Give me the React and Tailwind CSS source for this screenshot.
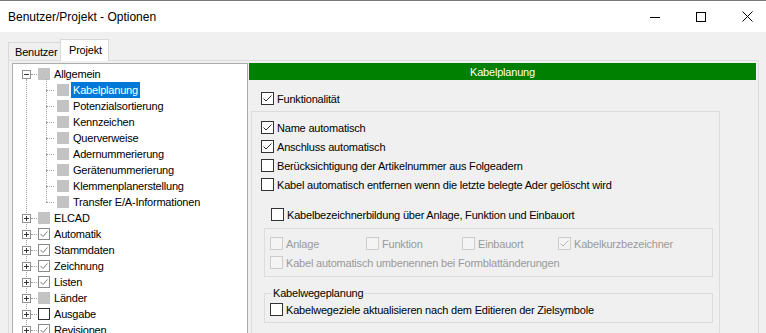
import React from 'react';

const children = [
  'Kabelplanung',
  'Potenzialsortierung',
  'Kennzeichen',
  'Querverweise',
  'Adernummerierung',
  'Gerätenummerierung',
  'Klemmenplanerstellung',
  'Transfer E/A-Informationen',
];

const topItems = [
  { name: 'ELCAD', state: 'gray' },
  { name: 'Automatik', state: 'checked' },
  { name: 'Stammdaten', state: 'checked' },
  { name: 'Zeichnung', state: 'checked' },
  { name: 'Listen', state: 'checked' },
  { name: 'Länder', state: 'gray' },
  { name: 'Ausgabe', state: 'empty' },
  { name: 'Revisionen', state: 'checked' },
];

function Check({ checked, disabled }) {
  return (
    <span
      className={`w-[13px] h-[13px] shrink-0 border flex items-center justify-center ${
        disabled ? 'border-[#cccccc] bg-[#f4f4f4]' : 'border-[#333333] bg-white'
      }`}
    >
      {checked && (
        <svg width="11" height="11" viewBox="0 0 11 11">
          <path d="M1.5 5.5 L4 8 L9.5 2.5" fill="none" stroke={disabled ? '#b5b5b5' : '#333333'} strokeWidth="1" />
        </svg>
      )}
    </span>
  );
}

function Option({ label, checked, disabled, className = '' }) {
  return (
    <div className={`h-[19px] flex items-center ${className}`}>
      <Check checked={checked} disabled={disabled} />
      <span className={`ml-[3px] whitespace-nowrap ${disabled ? 'text-[#9a9a9a]' : 'text-black'}`}>{label}</span>
    </div>
  );
}

function ExpandBox({ open }) {
  return (
    <span className="relative z-10 w-[9px] h-[9px] shrink-0 border border-[#919191] bg-white flex items-center justify-center">
      <svg width="7" height="7" viewBox="0 0 7 7">
        <path d="M1 3.5 H6" stroke="#333" strokeWidth="1" />
        {!open && <path d="M3.5 1 V6" stroke="#333" strokeWidth="1" />}
      </svg>
    </span>
  );
}

function TreeIcon({ state }) {
  if (state === 'gray') return <span className="block w-[12px] h-[12px] shrink-0 bg-[#c3c3c3]" />;
  return (
    <span
      className={`w-[12px] h-[12px] shrink-0 border bg-white flex items-center justify-center ${
        state === 'empty' ? 'border-[#333333]' : 'border-[#8a8a8a]'
      }`}
    >
      {state === 'checked' && (
        <svg width="10" height="10" viewBox="0 0 10 10">
          <path d="M1.5 5 L4 7.5 L8.5 2.5" fill="none" stroke="#7a7a7a" strokeWidth="1" />
        </svg>
      )}
    </span>
  );
}

function Tree() {
  return (
    <div className="relative w-[236px] mt-[2px] border border-b-0 border-[#acacac] bg-white pt-[2px] overflow-hidden">
      {/* tree lines */}
      <div className="absolute left-[13px] top-[15px] bottom-0 border-l border-dotted border-[#a0a0a0]" />
      <div className="absolute left-[33px] top-[15px] h-[123px] border-l border-dotted border-[#a0a0a0]" />

      <div className="h-4 flex items-center pl-[9px]">
        <ExpandBox open />
        <span className="w-[6px] border-t border-dotted border-[#a0a0a0]" />
        <span className="flex ml-[1px]"><TreeIcon state="gray" /></span>
        <span className="ml-[4px]">Allgemein</span>
      </div>

      {children.map((c, i) => (
        <div key={c} className="h-4 flex items-center pl-[33px]">
          <span className="w-[8px] border-t border-dotted border-[#a0a0a0]" />
          <span className="flex ml-[3px]"><TreeIcon state="gray" /></span>
          <span
            className={`ml-[2px] px-[2px] h-[16px] leading-[16px] whitespace-nowrap ${
              i === 0 ? 'bg-[#0078d7] text-white' : 'text-black'
            }`}
          >
            {c}
          </span>
        </div>
      ))}

      {topItems.map((t) => (
        <div key={t.name} className="h-4 flex items-center pl-[9px]">
          <ExpandBox />
          <span className="w-[6px] border-t border-dotted border-[#a0a0a0]" />
          <span className="flex ml-[1px]"><TreeIcon state={t.state} /></span>
          <span className="ml-[4px]">{t.name}</span>
        </div>
      ))}
    </div>
  );
}

export default function App() {
  return (
    <div className="w-[766px] h-[333px] overflow-hidden bg-[#f0f0f0] flex flex-col text-[11px] tracking-[-0.2px] leading-[14px] text-black font-['Segoe_UI','Liberation_Sans',Arial,sans-serif]">
      <div className="h-px bg-[#7a7a7a] shrink-0" />

      {/* title bar */}
      <div className="h-[31px] shrink-0 bg-white flex items-center justify-between pl-[8px]">
        <span className="text-[12px] tracking-normal">Benutzer/Projekt - Optionen</span>
        <div className="flex h-full -mr-[4px]">
          <div className="w-[46px] flex items-center justify-center">
            <svg width="10" height="10" viewBox="0 0 10 10"><path d="M0 5.5 H10" stroke="#000" strokeWidth="1" /></svg>
          </div>
          <div className="w-[46px] flex items-center justify-center">
            <svg width="10" height="10" viewBox="0 0 10 10"><rect x="0.5" y="0.5" width="9" height="9" fill="none" stroke="#000" strokeWidth="1" /></svg>
          </div>
          <div className="w-[46px] flex items-center justify-center">
            <svg width="11" height="11" viewBox="0 0 11 11"><path d="M0.5 0.5 L10.5 10.5 M10.5 0.5 L0.5 10.5" stroke="#000" strokeWidth="1" /></svg>
          </div>
        </div>
      </div>

      {/* tabs */}
      <div className="h-[28px] shrink-0 flex items-end pl-[8px]">
        <div className="h-[18px] w-[52px] border border-r-0 border-b-0 border-[#d9d9d9] flex items-center pl-[6px]">Benutzer</div>
        <div className="relative z-10 -mb-px h-[22px] w-[49px] border border-b-0 border-[#d9d9d9] bg-white flex items-start pt-[3px] pl-[8px]">
          Projekt
        </div>
      </div>

      {/* tab page */}
      <div className="ml-[8px] w-[751px] flex-1 min-h-0 border border-b-0 border-[#dcdcdc] flex pl-[3px]">
        <Tree />

        <div className="flex-1 flex flex-col pt-[2px] pl-px">
          <div className="w-[507px] h-[17px] shrink-0 bg-[#008000] text-white flex items-center justify-center">Kabelplanung</div>

          <div className="mt-[12px] pl-[12px] h-[13px] flex items-center">
            <Check checked />
            <span className="ml-[3px]">Funktionalität</span>
          </div>

          <div className="mt-[6px] ml-[2px] w-[469px] flex-1 border border-b-0 border-[#dcdcdc] pt-[6px] pl-[9px]">
            <Option label="Name automatisch" checked />
            <Option label="Anschluss automatisch" checked />
            <Option label="Berücksichtigung der Artikelnummer aus Folgeadern" />
            <Option label="Kabel automatisch entfernen wenn die letzte belegte Ader gelöscht wird" />

            <Option className="mt-[11px] ml-[10px]" label="Kabelbezeichnerbildung über Anlage, Funktion und Einbauort" />

            <div className="mt-[4px] ml-[3px] w-[449px] border border-[#dcdcdc] pt-[5px] pb-[4px] pl-[5px]">
              <div className="flex">
                <Option className="w-[96px]" label="Anlage" disabled />
                <Option className="w-[96px]" label="Funktion" disabled />
                <Option className="w-[96px]" label="Einbauort" disabled />
                <Option label="Kabelkurzbezeichner" checked disabled />
              </div>
              <Option label="Kabel automatisch umbenennen bei Formblattänderungen" disabled />
            </div>

            <fieldset className="mt-[9px] ml-[3px] w-[449px] border border-[#dcdcdc] pb-[3px]">
              <legend className="ml-[6px] px-[2px] leading-[14px]">Kabelwegeplanung</legend>
              <Option className="pl-[5px]" label="Kabelwegeziele aktualisieren nach dem Editieren der Zielsymbole" />
            </fieldset>
          </div>
        </div>
      </div>
    </div>
  );
}
